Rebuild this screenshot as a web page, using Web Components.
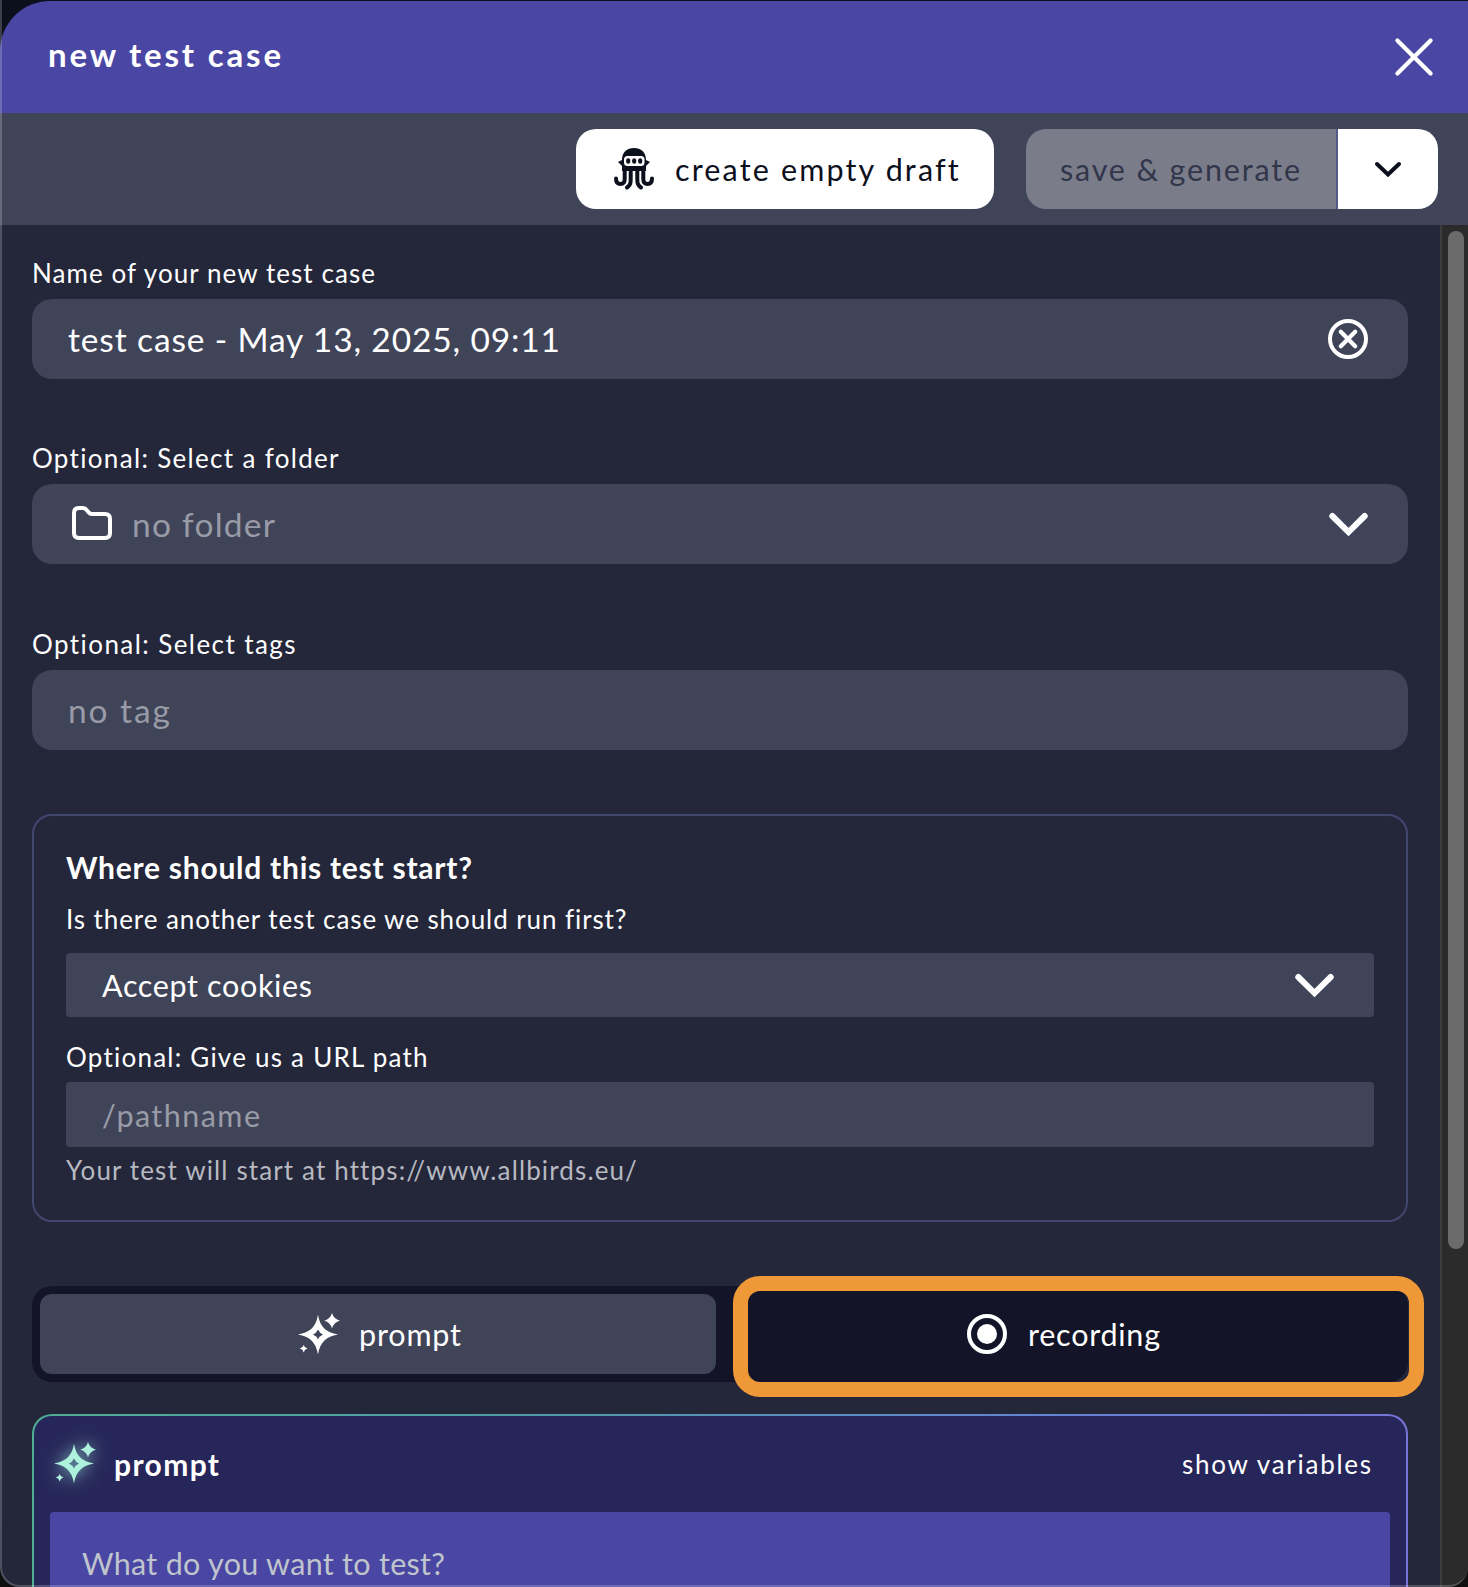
<!DOCTYPE html>
<html lang="en">
<head>
<meta charset="utf-8">
<title>new test case</title>
<style>
html,body{margin:0;height:1587px;overflow:hidden;background:#0c0f1c;font-family:Lato,"Liberation Sans",sans-serif;color:#fff}
</style>
</head>
<body>
<test-case-dialog></test-case-dialog>
<script>
const define = (name, html, setup) => {
  const t = document.createElement('template');
  t.innerHTML = html;
  customElements.define(name, class extends HTMLElement {
    constructor() {
      super();
      this.attachShadow({mode: 'open'}).append(t.content.cloneNode(true));
    }
    connectedCallback() { if (setup) setup(this, this.shadowRoot); }
  });
};

/* A single line of text whose tracking is tuned to a given width. */
define('tracked-text', `<style>
:host{display:block;white-space:nowrap;flex:none;line-height:1.2}
span{display:inline-block}
</style><span><slot></slot></span>`, (el, root) => {
  const size = el.getAttribute('size'), w = +el.getAttribute('width');
  el.style.fontSize = size + 'px';
  el.style.fontWeight = el.getAttribute('weight') || 400;
  const span = root.querySelector('span');
  const n = el.textContent.length;
  const natural = span.getBoundingClientRect().width;
  if (w && natural) {
    const ls = (w - natural) / (n - 1);
    span.style.letterSpacing = ls.toFixed(3) + 'px';
    span.style.marginRight = (-ls).toFixed(3) + 'px';
  }
});

const icons = {
  close: [34, 34, '<path d="M.4 .4L33.600 33.600M33.600 .4L.4 33.600" stroke-width="4.2" stroke-linecap="round"/>'],
  down: [33, 16, '<path d="M.3 0L16.500 16.100L32.700 0" stroke-width="6" stroke-linecap="round"/>'],
  'down-small': [22, 11, '<path d="M0 0L11 10.5L22 0" stroke-width="4" stroke-linecap="round"/>'],
  clear: [40, 40, '<circle cx="20" cy="20" r="18" stroke-width="4"/><path d="M12.8 12.8L27.2 27.2M27.2 12.8L12.8 27.2" stroke-width="4.2" stroke-linecap="round"/>'],
  folder: [40, 34, '<path d="M2 7Q2 2 7 2H11C14 2 14.5 4 16.5 6.2Q18 8 20 8H33Q38 8 38 13V27Q38 32 33 32H7Q2 32 2 27Z" stroke-width="4"/>'],
  record: [40, 40, '<circle cx="20" cy="20" r="18" stroke-width="4"/><circle cx="20" cy="20" r="10" fill="currentColor" stroke="none"/>'],
  sparkles: [42, 42, '<g fill="currentColor" stroke="none"><path fill-rule="evenodd" d="M20 1.800C22 14 28 19.500 40 21.500C28 23.500 22 29.500 20 41.500C18 29.500 12 23.500 0 21.500C12 19.500 18 14 20 1.800ZM20 16.500Q18.500 20 15 21.500Q18.500 23 20 26.500Q21.500 23 25 21.500Q21.500 20 20 16.500Z"/><path d="M34 0Q35.700 6 42 7.700Q35.700 9.400 34 15.400Q32.300 9.400 26.300 7.700Q32.300 6 34 0ZM5.700 32Q6.500 34.800 9.500 35.600Q6.500 36.400 5.700 39.400Q4.900 36.400 1.900 35.600Q4.900 34.800 5.700 32Z"/></g>'],
  octopus: [40, 42, '<g stroke="none" fill="currentColor"><path d="M8 12C8 4 13 0 20 0C27 0 32 4 32 12L36 14L32 18V23H8V18L4 14L8 12Z"/></g><rect x="10" y="8" width="20.500" height="10" rx="3.500" fill="#fff" stroke="none"/><g stroke="none" fill="currentColor"><ellipse cx="14.200" cy="13" rx="2.100" ry="2.800"/><ellipse cx="20.200" cy="13" rx="2.100" ry="2.800"/><ellipse cx="26.200" cy="13" rx="2.100" ry="2.800"/></g><path d="M10.700 20V31Q10.700 36 6.500 36Q2 36 2 30.500M29.300 20V31Q29.300 36 33.500 36Q38 36 38 30.500M16.700 20V31C16.700 35 16.500 37 13 39.500M23.300 20V31C23.300 35 23.500 37 27 39.500" stroke-width="4" stroke-linecap="round"/><path d="M9 19H31V22.500H9Z" fill="currentColor" stroke="none"/>']
};
define('app-icon', `<style>:host{display:block;flex:none}svg{display:block;overflow:visible;fill:none;stroke:currentColor}</style><div></div>`, (el, root) => {
  const [w, h, body] = icons[el.getAttribute('name')];
  root.querySelector('div').innerHTML = `<svg width="${w}" height="${h}" viewBox="0 0 ${w} ${h}">${body}</svg>`;
});

define('title-bar', `<style>
:host{display:flex;justify-content:space-between;align-items:center;height:112px;box-sizing:border-box;padding:0 37px 0 48px;background:#4947a3;border-radius:50px 0 0 0}
::slotted(tracked-text){padding-bottom:4px}
</style><slot></slot>`);

define('tool-bar', `<style>
:host{display:flex;justify-content:flex-end;gap:32px;align-items:center;height:112px;box-sizing:border-box;padding-right:30px;background:#3f4459}
</style><slot></slot>`);

define('draft-button', `<style>
:host{display:flex;align-items:center;width:418px;height:80px;box-sizing:border-box;padding-left:38px;gap:21px;background:#fff;color:#0c0f1c;border-radius:20px}
</style><slot></slot>`);

define('split-button', `<style>
:host{display:flex;width:412px;height:80px;border-radius:20px;overflow:hidden}
div{display:flex;align-items:center}
.main{width:312px;box-sizing:border-box;padding-left:34px;background:#7a7c8a;color:#32364b;border-right:2px solid #545a87}
.more{flex:1;justify-content:center;background:#fff;color:#0c0f1c}
</style><div class="main"><slot></slot></div><div class="more"><slot name="more"></slot></div>`);

define('form-field', `<style>
:host{display:block}
.label{display:flex;align-items:center;height:53px;box-sizing:border-box;padding-top:2px}
.box{display:flex;align-items:center;height:80px;box-sizing:border-box;padding:0 40px 0 36px;background:#3f4459;border-radius:20px}
:host([compact]) .label{height:65px;padding-top:16px}
:host([compact]) .box{height:65px;border-radius:4px;padding-right:43px}
:host([lead]) .label{height:67px;padding-top:0}
:host([lead]) .box{height:64px}
.grow{flex:1}
::slotted(.muted){color:#999ba6}
</style><div class="label"><slot name="label"></slot></div><div class="box"><slot name="icon"></slot><slot></slot><div class="grow"></div><slot name="end"></slot></div>`);

define('start-card', `<style>
:host{display:block;height:408px;box-sizing:border-box;margin-top:64px;padding:30px 32px 0;border:2px solid #414770;border-radius:20px}
.title{display:flex;align-items:center;height:40px;box-sizing:border-box;padding-top:2px}
.hint{display:flex;align-items:center;height:48px;color:#b7b9c0}
</style><div class="title"><slot name="title"></slot></div><slot></slot><div class="hint"><slot name="hint"></slot></div>`);

define('mode-tabs', `<style>
:host{display:flex;gap:16px;height:96px;box-sizing:border-box;margin-top:64px;padding:8px;background:#131428;border-radius:20px;position:relative}
div{display:flex;align-items:center;box-sizing:border-box;gap:19px}
.on{width:676px;padding-left:258px;background:#3f4459;border-radius:12px}
.off{flex:1;padding-left:235px;gap:21px}
.ring{position:absolute;left:701px;top:-10px;width:691px;height:121px;border:15px solid #ef9837;border-radius:27px}
</style><div class="on"><slot name="first"></slot></div><div class="off"><slot name="second"></slot></div><div class="ring"></div>`);

define('prompt-card', `<style>
:host{display:block;box-sizing:border-box;height:260px;margin-top:32px;border-radius:20px;background:linear-gradient(#27265a,#27265a) padding-box,linear-gradient(90deg,#4fae94,#4f9ca5 35%,#6384d0 72%,#7775d8) border-box;border:2px solid transparent;padding:0 16px}
.head{display:flex;align-items:center;height:96px;padding:0 19px 0 4px}
.glow{color:#aef1dd;padding-bottom:2px;filter:drop-shadow(0 0 7px rgba(160,240,220,.55)) drop-shadow(0 0 12px rgba(160,240,220,.25))}
.grow{flex:1}
.area{height:102px;display:flex;align-items:center;padding:0 0 80px 32px;background:#4947a3;border-radius:4px;color:#c0c4cd}
</style><div class="head"><div class="glow"><slot name="icon"></slot></div><slot name="title"></slot><div class="grow"></div><slot name="action"></slot></div><div class="area"><slot></slot></div>`);

define('scroll-rail', `<style>
:host{display:block;width:28px;height:1362px;box-sizing:border-box;padding:6px 0 0 6px;background:#2b2b2b;border-left:2px solid #3d3d3d}
div{width:16px;height:1018px;border-radius:8px;background:#6b6b6b}
</style><div></div>`);

define('test-case-dialog', `<style>
:host{display:block;position:relative;width:1468px;height:1587px;overflow:hidden;padding-top:1px;box-sizing:border-box}
.body{display:flex;height:1362px;background:#24263a}
.form{flex:1;padding:21px 32px 0;height:1341px;overflow:hidden}
.s1{margin-top:52px}.s2{margin-top:53px}
.frame{position:absolute;inset:0;border-left:2px solid rgba(255,255,255,.2);border-bottom:2px solid rgba(255,255,255,.2);border-radius:0 0 20px 20px;box-shadow:0 0 0 30px #101011;clip-path:inset(0)}
.folder{margin:-3px 20px 0 4px}
.end{margin-right:3px}
</style>
<title-bar><tracked-text size="33" weight="700" width="233">new test case</tracked-text><app-icon name="close"></app-icon></title-bar>
<tool-bar>
  <draft-button><app-icon name="octopus"></app-icon><tracked-text size="30.500" width="283">create empty draft</tracked-text></draft-button>
  <split-button><tracked-text size="30.500" width="240">save &amp; generate</tracked-text><app-icon slot="more" name="down-small"></app-icon></split-button>
</tool-bar>
<div class="body">
  <div class="form">
    <form-field><tracked-text slot="label" size="26" width="343">Name of your new test case</tracked-text><tracked-text size="33.500" width="492">test case - May 13, 2025, 09:11</tracked-text><app-icon slot="end" name="clear"></app-icon></form-field>
    <form-field class="s1"><tracked-text slot="label" size="26" width="307">Optional: Select a folder</tracked-text><app-icon class="folder" slot="icon" name="folder"></app-icon><tracked-text class="muted" size="33.500" width="143">no folder</tracked-text><app-icon class="end" slot="end" name="down"></app-icon></form-field>
    <form-field class="s2"><tracked-text slot="label" size="26" width="264">Optional: Select tags</tracked-text><tracked-text class="muted" size="33.500" width="102">no tag</tracked-text></form-field>
    <start-card>
      <tracked-text slot="title" size="30" weight="700" width="406">Where should this test start?</tracked-text>
      <form-field compact lead><tracked-text slot="label" size="26" width="560">Is there another test case we should run first?</tracked-text><tracked-text size="30.500" width="210">Accept cookies</tracked-text><app-icon slot="end" name="down"></app-icon></form-field>
      <form-field compact><tracked-text slot="label" size="26" width="362">Optional: Give us a URL path</tracked-text><tracked-text class="muted" style="padding-top:2px" size="30.500" width="158">/pathname</tracked-text></form-field>
      <tracked-text slot="hint" size="26" width="570">Your test will start at https://www.allbirds.eu/</tracked-text>
    </start-card>
    <mode-tabs>
      <app-icon slot="first" name="sparkles"></app-icon><tracked-text slot="first" size="30.500" width="102">prompt</tracked-text>
      <app-icon slot="second" name="record"></app-icon><tracked-text slot="second" size="30.500" width="132">recording</tracked-text>
    </mode-tabs>
    <prompt-card>
      <app-icon slot="icon" name="sparkles"></app-icon><tracked-text slot="title" style="margin-left:18px" size="30" weight="700" width="105">prompt</tracked-text>
      <tracked-text slot="action" size="26" width="189" style="padding-top:1px">show variables</tracked-text>
      <tracked-text size="30.500" width="363">What do you want to test?</tracked-text>
    </prompt-card>
  </div>
  <scroll-rail></scroll-rail>
</div>
<div class="frame"></div>`);
</script>
</body>
</html>
